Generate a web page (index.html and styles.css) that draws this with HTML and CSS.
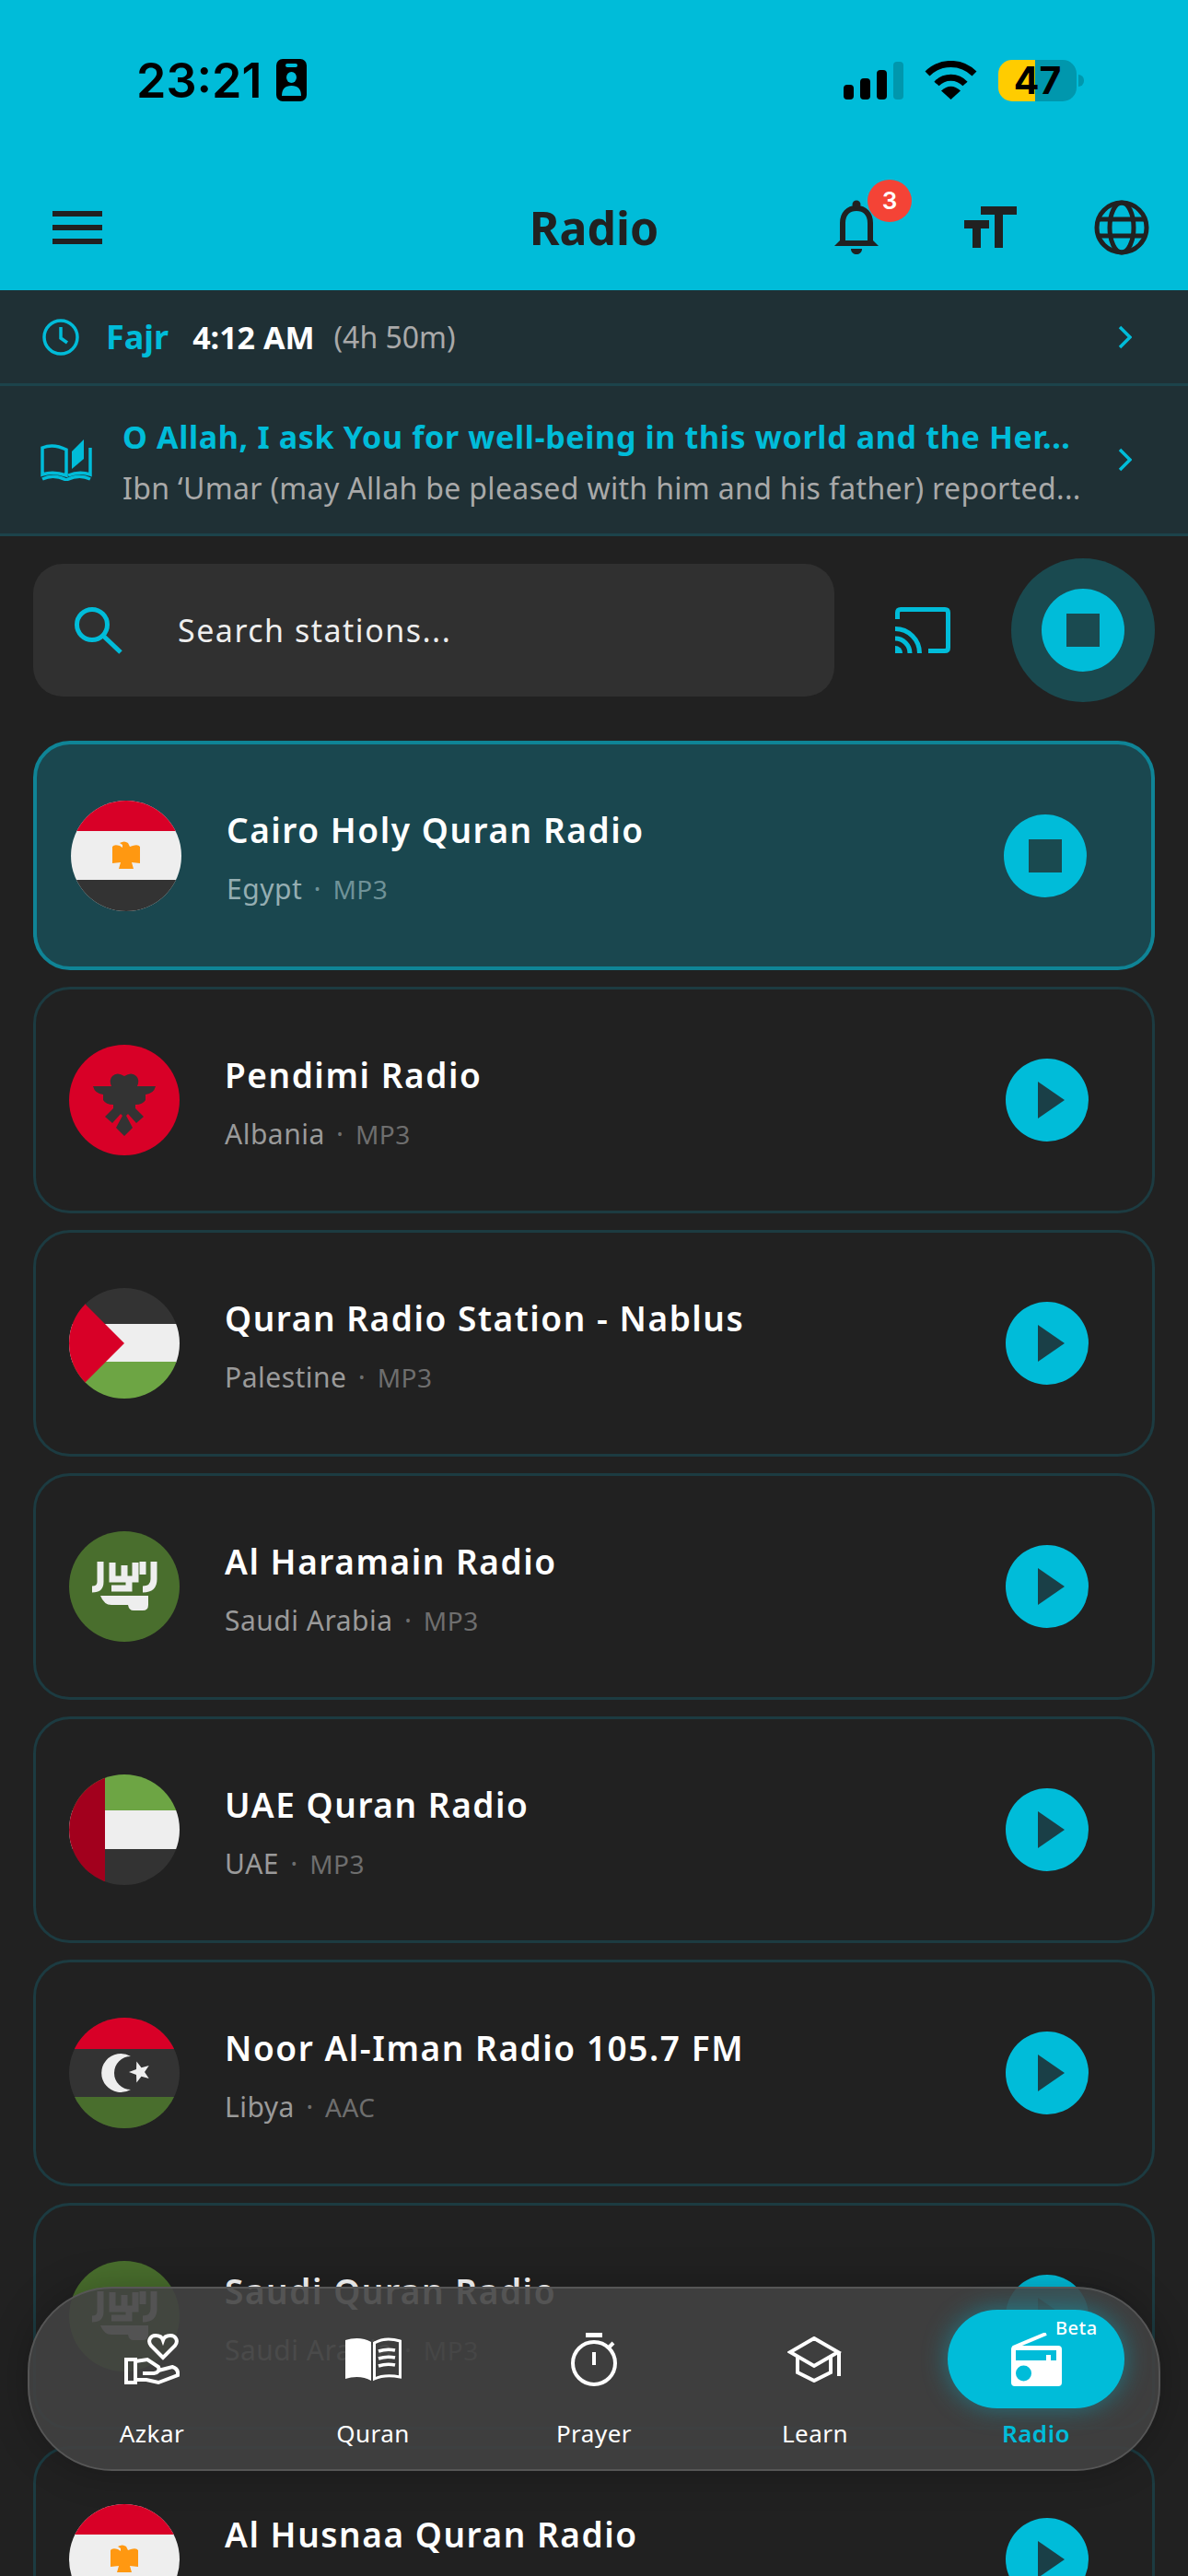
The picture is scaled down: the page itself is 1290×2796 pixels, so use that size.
FILE: index.html
```html
<!DOCTYPE html>
<html lang="en">
  <head>
    <meta charset="UTF-8" />
    <meta name="viewport" content="width=device-width, initial-scale=1.0" />
    <title>Radio</title>
    <link rel="stylesheet" href="styles.css">
  </head>
  <body>
    <svg class="defs" width="0" height="0">
      <symbol id="flag-egypt" viewBox="0 0 120 120">
        <rect width="120" height="120" fill="#eeeeee" />
        <rect width="120" height="33" fill="#d80027" />
        <rect y="86" width="120" height="34" fill="#333333" />
        <path fill="#ff9811" d="M45 50 Q47 47 53 49 L56 51 V48 L53 46 Q58 43 62 46 L64 50 L67 49 Q73 47 75 50 V68 L66 67 L68 74 H52 L54 67 L45 68 Z" />
      </symbol>
      <symbol id="flag-albania" viewBox="0 0 120 120">
        <rect width="120" height="120" fill="#d80027" />
        <path fill="#333333" d="M26 45 H46 Q43 38 47 34 Q52 29 60 34 Q68 29 73 34 Q77 38 74 45 H94 Q92 53 83 54 V60 Q80 65 72 65 V69 L81 78 L73 85 L64 75 L62 77 L69 90 L60 99 L51 90 L58 77 L56 75 L47 85 L39 78 L48 69 V65 Q40 65 37 60 V54 Q28 53 26 45 Z" />
      </symbol>
      <symbol id="flag-palestine" viewBox="0 0 120 120">
        <rect width="120" height="40" fill="#333333" />
        <rect y="39" width="120" height="42" fill="#eeeeee" />
        <rect y="80" width="120" height="40" fill="#6da544" />
        <path fill="#d80027" d="M0 0 H18 V18 L60 60 L18 102 V120 H0 Z" />
      </symbol>
      <symbol id="flag-saudi" viewBox="0 0 120 120">
        <rect width="120" height="120" fill="#496e2d" />
        <g fill="none" stroke="#eeeeee" stroke-width="7">
          <path d="M34 33 V55 Q34 63 25 63" />
          <path d="M47 34 V52 H72 V34 M60 37 V52 M46 62 H65 V52" />
          <path d="M80 33 V47 M92 33 V52 Q92 63 80 63" />
        </g>
        <path fill="#eeeeee" d="M34 70 H86 V80 Q86 86 80 86 H70 Q65 86 64 80 H46 Q38 80 34 70 Z" />
      </symbol>
      <symbol id="flag-uae" viewBox="0 0 120 120">
        <rect width="120" height="40" fill="#6da544" />
        <rect y="39" width="120" height="42" fill="#eeeeee" />
        <rect y="81" width="120" height="39" fill="#333333" />
        <rect width="39" height="120" fill="#a2001d" />
      </symbol>
      <symbol id="flag-libya" viewBox="0 0 120 120">
        <rect width="120" height="120" fill="#333333" />
        <rect width="120" height="34" fill="#d80027" />
        <rect y="86" width="120" height="34" fill="#496e2d" />
        <path fill="#eeeeee" d="M67 42 A21 21 0 1 0 67 78 A17.5 17.5 0 1 1 67 42 Z" />
        <polygon fill="#eeeeee" points="65,59 73,56 73.3,47.6 78.5,54.2 86.7,52 82,59 86.7,66 78.5,63.8 73.3,70.4 73,62" />
      </symbol>
    </svg>

    <div class="page">
      <header class="top">
        <div class="status">
          <div class="status-left">
            <span class="time">23:21</span>
            <svg width="33" height="46" viewBox="0 0 33 46">
              <rect width="33" height="46" rx="7" fill="#000" />
              <rect x="10" y="5" width="13" height="4" rx="2" fill="#00bcd9" />
              <ellipse cx="16.5" cy="20" rx="5.5" ry="6" fill="#00bcd9" />
              <path d="M6 40 Q6 29 16.5 29 Q27 29 27 40 Z" fill="#00bcd9" />
            </svg>
          </div>
          <div class="status-right">
            <div class="signal">
              <span class="s1"></span><span class="s2"></span><span class="s3"></span><span class="s4"></span>
            </div>
            <svg width="57" height="42" viewBox="0 0 57 42" fill="none" stroke="#000" stroke-width="7">
              <path d="M3 14 A36 36 0 0 1 54 14" />
              <path d="M13 25 A21 21 0 0 1 44 25" />
              <path d="M18 32.5 Q28.5 23 39 32.5 L28.5 42 Z" fill="#000" stroke="none" />
            </svg>
            <div class="battery">47</div>
          </div>
        </div>
        <div class="app-bar">
          <div class="menu"><span></span><span></span><span></span></div>
          <h1>Radio</h1>
          <div class="actions">
            <div class="bell">
              <svg width="48" height="59" viewBox="0 0 48 59" fill="none" stroke="#212121" stroke-width="6">
                <path d="M9 45 V25 C9 15 15 9 24 9 C33 9 39 15 39 25 V45" />
                <path d="M0 50 L6 44 H42 L48 50 Z" fill="#212121" stroke="none" />
                <circle cx="24" cy="5" r="4.5" fill="#212121" stroke="none" />
                <path d="M18 53 H30 C30 61 18 61 18 53 Z" fill="#212121" stroke="none" />
              </svg>
              <span class="badge">3</span>
            </div>
            <svg width="57" height="45" viewBox="0 0 57 45" fill="#212121">
              <rect x="18" width="39" height="9" />
              <rect x="33" width="9" height="45" />
              <rect y="15" width="27" height="9" />
              <rect x="9" y="15" width="9" height="30" />
            </svg>
            <svg width="60" height="60" viewBox="0 0 60 60" fill="none" stroke="#212121" stroke-width="5">
              <circle cx="30" cy="30" r="27" />
              <ellipse cx="30" cy="30" rx="13" ry="27" />
              <path d="M5 21 H55 M5 39 H55" />
            </svg>
          </div>
        </div>
      </header>

      <div class="prayer-bar">
        <svg width="40" height="40" viewBox="0 0 40 40" fill="none" stroke="#00bcd9" stroke-width="3.5">
          <circle cx="20" cy="20" r="18" />
          <path d="M20 9 V21 L27 26" />
        </svg>
        <span class="prayer-name">Fajr</span>
        <span class="prayer-time">4:12 AM</span>
        <span class="prayer-left">(4h 50m)</span>
        <svg class="chevron" width="15" height="26" viewBox="0 0 15 26" fill="none" stroke="#00bcd9" stroke-width="3.5">
          <path d="M2 2 L13 13 L2 24" />
        </svg>
      </div>

      <div class="hadith-bar">
        <svg width="56" height="46" viewBox="0 0 56 46" fill="none" stroke="#00bcd9" stroke-width="3.5">
          <path d="M2 10 Q14 5 28 12 V40 Q14 35 2 39 Z" />
          <path d="M54 10 V39 Q42 35 30 40" />
          <path d="M34 33 V14 L47 1 V22 Z" fill="#00bcd9" stroke="none" />
          <path d="M2 44 Q14 38 28 45 Q42 38 54 44" />
        </svg>
        <div class="hadith-text">
          <div class="hadith-title">O Allah, I ask You for well-being in this world and the Her...</div>
          <div class="hadith-sub">Ibn ‘Umar (may Allah be pleased with him and his father) reported...</div>
        </div>
        <svg class="chevron" width="15" height="26" viewBox="0 0 15 26" fill="none" stroke="#00bcd9" stroke-width="3.5">
          <path d="M2 2 L13 13 L2 24" />
        </svg>
      </div>

      <div class="search-row">
        <div class="search-box">
          <svg width="52" height="51" viewBox="0 0 52 51" fill="none" stroke="#00bcd9" stroke-width="5">
            <circle cx="19" cy="19" r="16.5" />
            <path d="M31 31 L50 49" />
          </svg>
          <span>Search stations...</span>
        </div>
        <svg class="cast" width="60" height="50" viewBox="0 0 60 50" fill="none" stroke="#00bcd9" stroke-width="5">
          <path d="M2.5 13 V6 Q2.5 2.5 6 2.5 H54 Q57.5 2.5 57.5 6 V44 Q57.5 47.5 54 47.5 H36" />
          <path d="M0 23.5 A26.5 26.5 0 0 1 26.5 50" />
          <path d="M0 34 A16 16 0 0 1 16 50" />
          <path d="M0 42 A8 8 0 0 1 8 50 H0 Z" fill="#00bcd9" stroke="none" />
        </svg>
        <div class="stop-big">
          <div class="round-btn"><span class="stop"></span></div>
        </div>
      </div>

      <main class="list">
        <div class="card active">
          <svg class="flag" viewBox="0 0 120 120"><use href="#flag-egypt" /></svg>
          <div class="info">
            <div class="name">Cairo Holy Quran Radio</div>
            <div class="meta">Egypt <i>·</i> <b>MP3</b></div>
          </div>
          <div class="round-btn"><span class="stop"></span></div>
        </div>
        <div class="card">
          <svg class="flag" viewBox="0 0 120 120"><use href="#flag-albania" /></svg>
          <div class="info">
            <div class="name">Pendimi Radio</div>
            <div class="meta">Albania <i>·</i> <b>MP3</b></div>
          </div>
          <div class="round-btn"><span class="play"></span></div>
        </div>
        <div class="card">
          <svg class="flag" viewBox="0 0 120 120"><use href="#flag-palestine" /></svg>
          <div class="info">
            <div class="name">Quran Radio Station - Nablus</div>
            <div class="meta">Palestine <i>·</i> <b>MP3</b></div>
          </div>
          <div class="round-btn"><span class="play"></span></div>
        </div>
        <div class="card">
          <svg class="flag" viewBox="0 0 120 120"><use href="#flag-saudi" /></svg>
          <div class="info">
            <div class="name">Al Haramain Radio</div>
            <div class="meta">Saudi Arabia <i>·</i> <b>MP3</b></div>
          </div>
          <div class="round-btn"><span class="play"></span></div>
        </div>
        <div class="card">
          <svg class="flag" viewBox="0 0 120 120"><use href="#flag-uae" /></svg>
          <div class="info">
            <div class="name">UAE Quran Radio</div>
            <div class="meta">UAE <i>·</i> <b>MP3</b></div>
          </div>
          <div class="round-btn"><span class="play"></span></div>
        </div>
        <div class="card">
          <svg class="flag" viewBox="0 0 120 120"><use href="#flag-libya" /></svg>
          <div class="info">
            <div class="name">Noor Al-Iman Radio 105.7 FM</div>
            <div class="meta">Libya <i>·</i> <b>AAC</b></div>
          </div>
          <div class="round-btn"><span class="play"></span></div>
        </div>
        <div class="card">
          <svg class="flag" viewBox="0 0 120 120"><use href="#flag-saudi" /></svg>
          <div class="info">
            <div class="name">Saudi Quran Radio</div>
            <div class="meta">Saudi Arabia <i>·</i> <b>MP3</b></div>
          </div>
          <div class="round-btn"><span class="play"></span></div>
        </div>
        <div class="card">
          <svg class="flag" viewBox="0 0 120 120"><use href="#flag-egypt" /></svg>
          <div class="info">
            <div class="name">Al Husnaa Quran Radio</div>
            <div class="meta">&nbsp;</div>
          </div>
          <div class="round-btn"><span class="play"></span></div>
        </div>
      </main>

      <nav class="tabs">
        <div class="tab">
          <div class="tab-icon">
            <svg width="60" height="57" viewBox="0 0 60 57" fill="none" stroke="#fff" stroke-width="4">
              <path d="M42 27 L29 14 C25 9 28 3 34 3 C38 3 41 5 42 8 C43 5 46 3 50 3 C56 3 59 9 55 14 Z" />
              <rect x="2" y="29" width="10" height="25" />
              <path d="M12 31 L25 29 L37 37 Q39 43 32 44 H20 M37 41 L52 37 Q59 39 58 46 L37 54 L24 51 H12" />
            </svg>
          </div>
          <span>Azkar</span>
        </div>
        <div class="tab">
          <div class="tab-icon">
            <svg width="61" height="48" viewBox="0 0 61 48">
              <path fill="#fff" d="M0 3 C9 0 20 0 28 5 V47 C20 42 9 42 0 45 Z" />
              <path fill="none" stroke="#fff" stroke-width="3" d="M31.5 6 C40 1 50 1 59.5 4 V43 C50 41 40 41 31.5 45 Z" />
              <path fill="none" stroke="#fff" stroke-width="3.5" d="M36 15 Q45 12 54 14 M36 23 Q45 20 54 22 M36 31 Q45 28 54 30" />
            </svg>
          </div>
          <span>Quran</span>
        </div>
        <div class="tab">
          <div class="tab-icon">
            <svg width="50" height="58" viewBox="0 0 50 58" fill="none" stroke="#fff" stroke-width="4">
              <rect x="16" width="18" height="5" fill="#fff" stroke="none" />
              <circle cx="25" cy="33" r="23" />
              <path d="M25 21 V35" />
              <path d="M41 16 L46 11" />
            </svg>
          </div>
          <span>Prayer</span>
        </div>
        <div class="tab">
          <div class="tab-icon">
            <svg width="60" height="50" viewBox="0 0 60 50" fill="none" stroke="#fff" stroke-width="4">
              <path d="M29 2 L55 17 L29 32 L3 17 Z" />
              <path d="M11 22 V39 L29 48 L47 39 V22" />
              <path d="M56 17 V43" />
            </svg>
          </div>
          <span>Learn</span>
        </div>
        <div class="tab current">
          <div class="tab-icon">
            <span class="beta">Beta</span>
            <svg width="55" height="58" viewBox="0 0 55 58">
              <path d="M2 16 L38 1" stroke="#fff" stroke-width="4" />
              <rect y="14" width="55" height="44" rx="4" fill="#fff" />
              <path d="M5 19 H49 V30 H43 V24 H38 V30 H5 Z" fill="#00bcd9" />
              <circle cx="13.5" cy="44" r="8.5" fill="#00bcd9" />
            </svg>
          </div>
          <span>Radio</span>
        </div>
      </nav>
    </div>
  </body>
</html>
```

FILE: styles.css
```css
body {
  margin: 0;
  background-color: #212121;
  font-family: "Noto Sans", sans-serif;
}
.defs {
  display: block;
  position: absolute;
}
.page {
  position: relative;
  width: 1290px;
  height: 2796px;
  overflow: hidden;
  background-color: #212121;
}

/* top cyan area */
.top {
  height: 315px;
  background-color: #00bcd9;
}
.status {
  display: flex;
  justify-content: space-between;
  align-items: center;
  height: 46px;
  padding: 64px 113px 68px 148px;
}
.status-left {
  display: flex;
  align-items: center;
  gap: 16px;
}
.time {
  font-family: Inter, sans-serif;
  font-size: 52px;
  font-weight: 600;
  color: #000;
}
.status-right {
  display: flex;
  align-items: center;
  gap: 23px;
}
.signal {
  display: flex;
  align-items: flex-end;
  gap: 7px;
  height: 41px;

  span {
    width: 11px;
    border-radius: 4px;
    background-color: #000;
  }
  .s1 { height: 16px; }
  .s2 { height: 23px; }
  .s3 { height: 32px; }
  .s4 { height: 41px; background-color: #0097ad; }
}
.battery {
  position: relative;
  width: 85px;
  height: 45px;
  margin-right: 8px;
  border-radius: 15px;
  background: linear-gradient(to right, #ffcc00 47%, #0097ad 47%);
  font-family: Inter, sans-serif;
  font-size: 41px;
  font-weight: 700;
  line-height: 45px;
  text-align: center;
  color: #000;
}
.battery::after {
  content: "";
  position: absolute;
  right: -8px;
  top: 16px;
  width: 6px;
  height: 13px;
  border-radius: 0 6px 6px 0;
  background-color: #0097ad;
}
.app-bar {
  display: grid;
  grid-template-columns: 1fr auto 1fr;
  align-items: center;
  height: 137px;
  padding: 0 42px;

  h1 {
    margin: 0;
    font-size: 50px;
    font-weight: 700;
    color: #212121;
  }
}
.menu {
  display: flex;
  flex-direction: column;
  gap: 9px;
  margin-left: 15px;

  span {
    width: 54px;
    height: 6px;
    background-color: #212121;
  }
}
.actions {
  display: flex;
  justify-content: flex-end;
  align-items: center;
  gap: 84px;
}
.bell {
  position: relative;
  display: flex;
  margin-right: 9px;
}
.badge {
  position: absolute;
  left: 36px;
  top: -22px;
  width: 48px;
  height: 46px;
  border-radius: 50%;
  background-color: #f44336;
  font-family: Inter, sans-serif;
  font-size: 26px;
  font-weight: 600;
  line-height: 46px;
  text-align: center;
  color: white;
}

/* prayer + hadith strips */
.prayer-bar {
  display: flex;
  align-items: center;
  height: 101px;
  padding: 0 61px 0 46px;
  background-color: #1f3035;
  border-bottom: 3px solid #1c434b;
}
.prayer-name {
  margin-left: 29px;
  font-size: 36px;
  font-weight: 700;
  color: #00bcd9;
}
.prayer-time {
  margin-left: 26px;
  font-size: 34px;
  font-weight: 700;
  color: white;
}
.prayer-left {
  flex: 1;
  margin-left: 21px;
  font-size: 32px;
  color: #a9a9a9;
}
.hadith-bar {
  display: flex;
  align-items: center;
  height: 160px;
  padding: 0 61px 0 44px;
  background-color: #1f3035;
  border-bottom: 3px solid #1c434b;
}
.hadith-text {
  flex: 1;
  margin-left: 33px;
  padding-top: 3px;
  white-space: nowrap;
}
.hadith-title {
  font-size: 34px;
  font-weight: 700;
  letter-spacing: 0.66px;
  color: #00bcd9;
}
.hadith-sub {
  margin-top: 11px;
  font-size: 32px;
  letter-spacing: 0.34px;
  color: #a9a9a9;
}

/* search */
.search-row {
  display: flex;
  align-items: center;
  padding: 24px 36px 0;
  height: 156px;
}
.search-box {
  display: flex;
  align-items: center;
  gap: 60px;
  box-sizing: border-box;
  width: 870px;
  height: 144px;
  padding-left: 45px;
  border-radius: 32px;
  background-color: #303030;
  font-size: 34px;
  letter-spacing: 1.5px;
  color: #eeeeee;
}
.cast {
  margin-left: 66px;
}
.stop-big {
  display: flex;
  align-items: center;
  justify-content: center;
  width: 156px;
  height: 156px;
  margin-left: 66px;
  border-radius: 50%;
  background-color: #1a4a50;
}

/* shared round button */
.round-btn {
  display: flex;
  align-items: center;
  justify-content: center;
  flex-shrink: 0;
  width: 90px;
  height: 90px;
  border-radius: 50%;
  background-color: #00bcd9;
}
.stop {
  width: 36px;
  height: 36px;
  background-color: #1a4a50;
}
.play {
  width: 0;
  height: 0;
  margin-left: 8px;
  border-left: 29px solid #1a3f47;
  border-top: 20px solid transparent;
  border-bottom: 20px solid transparent;
}

/* station list */
.list {
  display: flex;
  flex-direction: column;
  gap: 18px;
  padding: 42px 36px 0;
}
.card {
  display: flex;
  align-items: center;
  box-sizing: border-box;
  flex-shrink: 0;
  height: 246px;
  padding: 0 69px 0 36px;
  border: 3px solid #1c3b41;
  border-radius: 40px;
}
.card.active {
  height: 249px;
  padding: 0 70px 0 37px;
  border: 4px solid #0f8496;
  background-color: #1a474f;

  .meta {
    color: #95aeb2;
  }
  .meta b, .meta i {
    color: #6f9298;
  }
}
.flag {
  width: 120px;
  height: 120px;
  border-radius: 50%;
}
.info {
  flex: 1;
  margin-left: 49px;
  padding-top: 6px;
}
.name {
  font-size: 37px;
  font-weight: 600;
  line-height: 46px;
  letter-spacing: 1.55px;
  color: white;
}
.meta {
  margin-top: 21px;
  font-size: 30px;
  line-height: 40px;
  letter-spacing: 0.5px;
  color: #9a9a9a;

  i {
    font-style: normal;
    color: #6e6e6e;
    margin: 0 4px;
  }
  b {
    font-size: 28px;
    font-weight: 400;
    color: #6e6e6e;
  }
}

/* floating bottom nav */
.tabs {
  position: absolute;
  left: 30px;
  top: 2482px;
  display: flex;
  box-sizing: border-box;
  width: 1230px;
  height: 200px;
  padding: 23px 13px 0;
  border: 2px solid #565656;
  border-radius: 92px;
  background-color: rgba(65, 65, 65, 0.9);
  box-shadow: 0 0 40px rgba(0, 0, 0, 0.25);
}
.tab {
  display: flex;
  flex-direction: column;
  align-items: center;
  width: 240px;
  font-size: 26px;
  letter-spacing: 0.5px;
  color: white;
}
.tab-icon {
  position: relative;
  display: flex;
  align-items: center;
  justify-content: center;
  width: 192px;
  height: 107px;
  margin-bottom: 9px;
  border-radius: 54px;
}
.tab.current {
  color: #00bcd9;
  font-weight: 600;

  .tab-icon {
    background-color: #00bcd9;
    box-shadow: 0 0 28px rgba(0, 188, 217, 0.45);
  }
}
.beta {
  position: absolute;
  left: 117px;
  top: 6px;
  font-size: 20px;
  font-weight: 500;
  letter-spacing: 0.5px;
  color: white;
}
```
